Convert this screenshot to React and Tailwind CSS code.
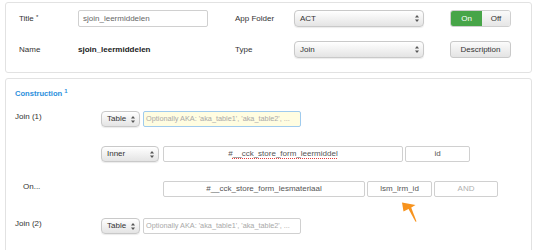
import React from "react";

const font = { fontFamily: '"Liberation Sans", Arial, sans-serif' };

function Arrows() {
  return (
    <svg width="4" height="7" viewBox="0 0 4 7" className="shrink-0">
      <path d="M2 0 L4 2.6 L0 2.6 Z" fill="#555" />
      <path d="M2 7 L4 4.4 L0 4.4 Z" fill="#555" />
    </svg>
  );
}

function Select({ w, h = "h-[17px]", children }) {
  return (
    <div
      className={`${w} ${h} flex items-center justify-between pl-[5px] pr-[4px] rounded-[4px] border border-[#c9c9c9] bg-gradient-to-b from-[#ffffff] to-[#e4e4e4] shadow-[0_1px_1px_rgba(0,0,0,0.08)] text-[8px] text-[#333] shrink-0`}
    >
      <span>{children}</span>
      <Arrows />
    </div>
  );
}

function Box({ w, className = "", children }) {
  return (
    <div
      className={`${w} h-[16px] flex items-center justify-center rounded-[2px] border border-[#d0d0d0] bg-white text-[8px] text-[#555] shrink-0 overflow-hidden whitespace-nowrap ${className}`}
    >
      {children}
    </div>
  );
}

export default function App() {
  return (
    <div className="w-[540px] h-[250px] overflow-hidden bg-white" style={font}>
      {/* Top panel */}
      <div className="relative ml-[5px] mt-[2px] w-[527px] rounded-[3px] border border-[#e2e2e2] pt-[7px] pb-[14px] pl-[13px]">
        <div className="grid grid-cols-[59px_157px_59px_156px_61px] items-center h-[17px]">
          <div className="text-[8px] text-[#333]">
            Title <span className="relative -top-[2px] text-[6px]">*</span>
          </div>
          <div className="w-[130px] h-[17px] flex items-center pl-[4px] rounded-[2px] border border-[#d0d0d0] bg-white text-[8px] text-[#666]">
            sjoin_leermiddelen
          </div>
          <div className="text-[8px] text-[#333]">App Folder</div>
          <Select w="w-[130px]">ACT</Select>
          <div className="w-[61px] h-[17px] flex rounded-[3px] overflow-hidden border border-[#cfcfcf] text-[8px]">
            <div className="w-[31px] flex items-center justify-center bg-[#47a548] text-white">On</div>
            <div className="flex-1 flex items-center justify-center bg-gradient-to-b from-[#fafafa] to-[#e6e6e6] text-[#333]">
              Off
            </div>
          </div>
        </div>
        <div className="grid grid-cols-[59px_157px_59px_156px_61px] items-center h-[17px] mt-[14px]">
          <div className="text-[8px] text-[#333]">Name</div>
          <div className="text-[8px] font-bold text-[#222]">sjoin_leermiddelen</div>
          <div className="text-[8px] text-[#333]">Type</div>
          <Select w="w-[130px]">Join</Select>
          <div className="w-[61px] h-[17px] flex items-center justify-center rounded-[3px] border border-[#c9c9c9] bg-gradient-to-b from-[#fbfbfb] to-[#e4e4e4] text-[8px] text-[#333]">
            Description
          </div>
        </div>
      </div>

      {/* Construction panel */}
      <div className="relative ml-[5px] mt-[5px] w-[527px] h-[200px] rounded-[3px] border border-[#e2e2e2] pt-[10px] pl-[9px]">
        <div className="h-[10px] leading-[10px] text-[7.6px] font-bold text-[#2b8fdc]">
          Construction <span className="relative -top-[3px] text-[6px] font-bold">1</span>
        </div>

        {/* Join (1) */}
        <div className="flex mt-[12px] h-[16px]">
          <div className="w-[86px] pt-[1px] leading-[10px] text-[8px] text-[#333] shrink-0">Join (1)</div>
          <Select w="w-[39px]" h="h-[16px]">Table</Select>
          <div className="ml-[3px] w-[158px] h-[16px] flex items-center pl-[2px] rounded-[2px] border border-[#9fcbee] bg-[#fffde1] text-[7.3px] text-[#a9a9a9] whitespace-nowrap overflow-hidden">
            Optionally AKA: 'aka_table1', 'aka_table2', ...
          </div>
        </div>

        {/* Inner row */}
        <div className="flex mt-[19px] h-[16px]">
          <div className="w-[86px] shrink-0" />
          <Select w="w-[58px]" h="h-[16px]">Inner</Select>
          <Box w="w-[240px] ml-[4px]" className="text-[#444]">
            <span>#</span>
            <span className="underline decoration-dotted decoration-[#e23b3b] decoration-[1px] underline-offset-[1.5px]">
              __cck_store_form_leermiddel
            </span>
          </Box>
          <Box w="w-[65px] ml-[2px]">id</Box>
        </div>

        {/* On row */}
        <div className="flex mt-[19px] h-[16px]">
          <div className="w-[148px] pl-[8px] pt-[1px] leading-[10px] text-[8px] text-[#333] shrink-0">On...</div>
          <Box w="w-[202px]" className="text-[#444]">#__cck_store_form_lesmateriaal</Box>
          <Box w="w-[65px] ml-[2px]">lsm_lrm_id</Box>
          <Box w="w-[64px] ml-[2px]" className="text-[#b0b0b0]">AND</Box>
        </div>

        {/* Join (2) */}
        <div className="flex mt-[21px] h-[16px]">
          <div className="w-[86px] pt-[1px] leading-[10px] text-[8px] text-[#333] shrink-0">Join (2)</div>
          <Select w="w-[39px]" h="h-[16px]">Table</Select>
          <div className="ml-[3px] w-[158px] h-[16px] flex items-center pl-[2px] rounded-[2px] border border-[#d0d0d0] bg-white text-[7.3px] text-[#a9a9a9] whitespace-nowrap overflow-hidden">
            Optionally AKA: 'aka_table1', 'aka_table2', ...
          </div>
        </div>

        {/* Orange arrow overlay */}
        <svg
          className="absolute left-[390px] top-[120px]"
          width="30"
          height="26"
          viewBox="390 120 30 26"
        >
          <polygon points="396,123.5 409.5,126 404.5,129 397.5,132.5" fill="#f7931e" />
          <polygon points="402,129 405,128 410.5,142.5 409.5,142.8" fill="#f7931e" />
        </svg>
      </div>
    </div>
  );
}
